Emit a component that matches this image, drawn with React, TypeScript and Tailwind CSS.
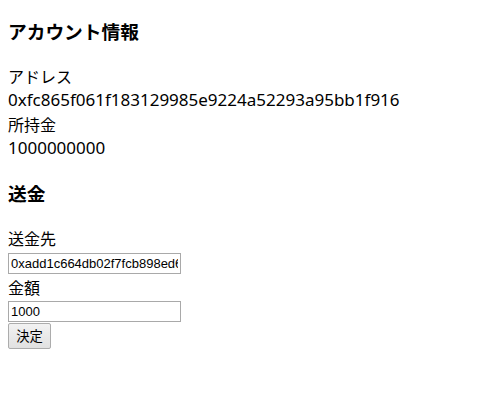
export default function App() {
  const jp = "font-['Noto_Sans_CJK_JP',sans-serif]";
  const latin = "font-['Noto_Sans','Noto_Sans_CJK_JP',sans-serif]";
  const field =
    "block w-[173px] h-[21px] border border-[#a9a9a9] px-[2px] text-[13px] text-black font-['Liberation_Sans',Arial,sans-serif] outline-none";

  return (
    <div className={`px-2 pt-[17px] text-black bg-white min-h-[400px] ${jp}`}>
      <h3 className="text-[18.72px] font-bold h-[28px] leading-[28px] mb-[19px]">アカウント情報</h3>
      <div className="text-[16px] leading-[24px]">アドレス</div>
      <div className={`text-[17px] leading-[24px] ${latin}`}>0xfc865f061f183129985e9224a52293a95bb1f916</div>
      <div className="text-[16px] leading-[24px]">所持金</div>
      <div className={`text-[17px] leading-[24px] ${latin}`}>1000000000</div>

      <h3 className="text-[18.72px] font-bold h-[28px] leading-[28px] mt-[19px] mb-[19px]">送金</h3>
      <div className="text-[16px] leading-[24px]">送金先</div>
      <input
        type="text"
        defaultValue="0xadd1c664db02f7fcb898ed6a1f04c2e9b37d85a0"
        className={`mt-[3px] ${field}`}
      />
      <div className="text-[16px] leading-[24px] mt-[1px]">金額</div>
      <input type="text" defaultValue="1000" className={`mt-[2px] ${field}`} />
      <button className="block mt-[1px] w-[43px] h-[26px] border border-[#acacac] rounded-[2px] bg-gradient-to-b from-[#f2f2f2] to-[#e1e1e1] text-[13.33px] leading-none text-black">
        決定
      </button>
    </div>
  );
}
